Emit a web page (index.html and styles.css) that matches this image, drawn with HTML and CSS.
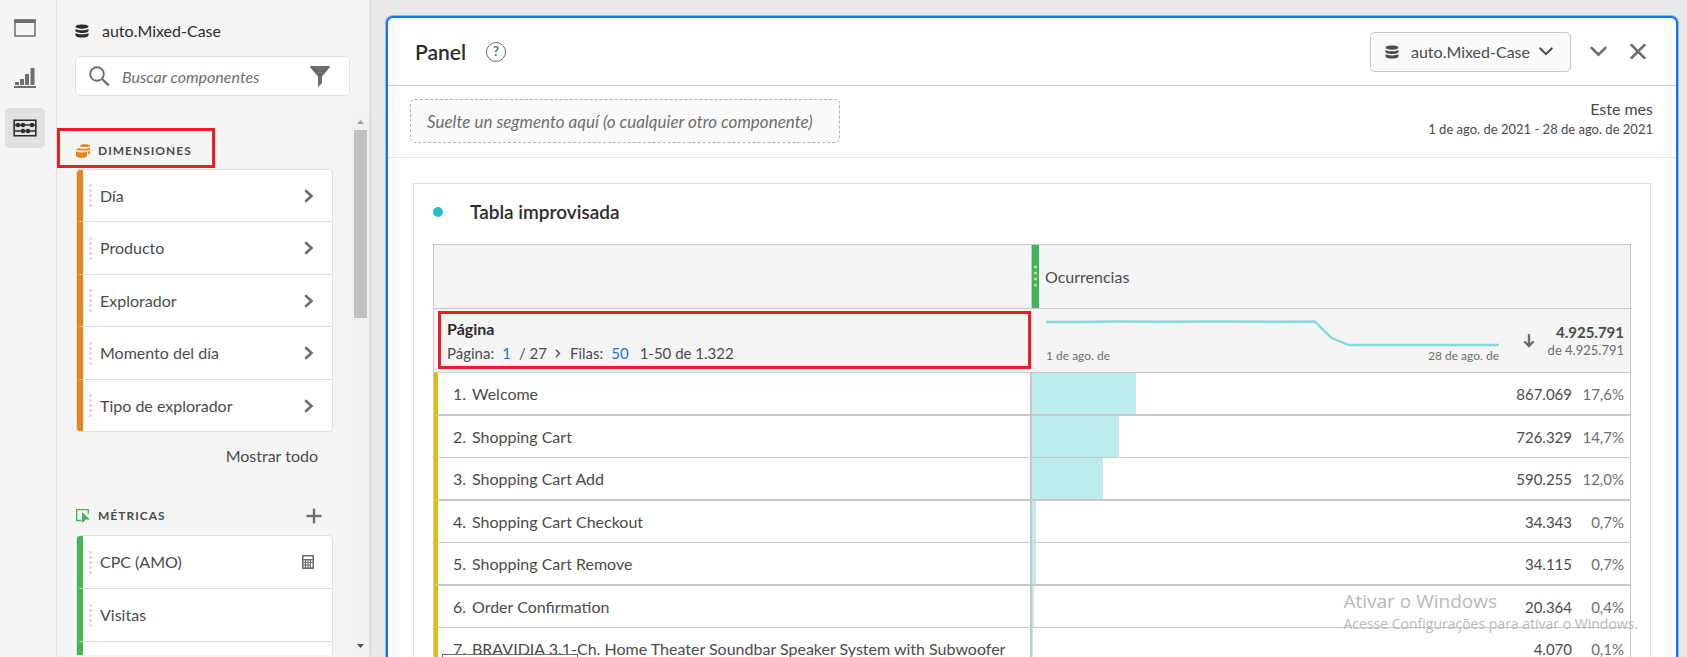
FILE: index.html
```html
<!DOCTYPE html>
<html lang="es">
<head>
<meta charset="utf-8">
<title>Panel - auto.Mixed-Case</title>
<link rel="stylesheet" href="styles.css">
</head>
<body>
<svg class="defs" aria-hidden="true">
  <symbol id="i-data" viewBox="0 0 14 14"><path d="M.5 2.6C.5 1.2 3.4.4 7 .4s6.500.8 6.500 2.200S10.600 4.800 7 4.800.5 4 .5 2.600zM.5 4.700C2 5.800 4.400 6.200 7 6.200s5-.4 6.500-1.500v2.100C13.500 8.200 10.600 9 7 9S.5 8.200.5 6.800zM.5 9C2 10.100 4.400 10.400 7 10.400s5-.3 6.500-1.400v2.200c0 1.400-2.900 2.300-6.500 2.300S.5 12.600.5 11.200z" fill="currentColor"/></symbol>
  <symbol id="i-right" viewBox="0 0 10 14"><path d="M2 2l5.500 5L2 12" fill="none" stroke="currentColor" stroke-width="2.600" stroke-linecap="round"/></symbol>
  <symbol id="i-down" viewBox="0 0 16 10"><path d="M1.500 1.500L8 8l6.500-6.500" fill="none" stroke="currentColor" stroke-width="2.400" stroke-linecap="round"/></symbol>
  <symbol id="i-grip" viewBox="0 0 3 23"><path d="M0 0h3v3H0zM0 5h3v3H0zM0 10h3v3H0zM0 15h3v3H0zM0 20h3v3H0z" fill="#e1e1e1"/></symbol>
</svg>
<div class="app">
  <nav class="rail" aria-label="Vistas">
    <button class="rail-button" aria-label="Paneles"><svg width="22" height="18" viewBox="0 0 22 18"><path d="M1 1h20v16H1z" fill="none" stroke="#6e6e6e" stroke-width="1.500"/><path d="M.5.5h21v3.500H.5z" fill="#6e6e6e"/></svg></button>
    <button class="rail-button" aria-label="Visualizaciones"><svg width="22" height="20" viewBox="0 0 22 20"><path d="M0 18h22v2H0zM1 14h4v3H1zM6 11h4v6H6zM11 6h4v11h-4zM16.500 0h4v17h-4z" fill="#6e6e6e"/></svg></button>
    <button class="rail-button selected" aria-label="Componentes"><svg width="24" height="18" viewBox="0 0 24 18"><path d="M1.200 1.200h21.600v15.600H1.200zM1 6h22M1 12h22" fill="none" stroke="#2c2c2c" stroke-width="1.600"/><g fill="#2c2c2c"><circle cx="5" cy="6" r="2.200"/><circle cx="10" cy="6" r="2.200"/><circle cx="19" cy="6" r="2.200"/><circle cx="10" cy="12" r="2.200"/><circle cx="15" cy="12" r="2.200"/></g></svg></button>
  </nav>

  <aside class="sidebar">
    <div class="suite"><svg width="14" height="14"><use href="#i-data"/></svg>auto.Mixed-Case</div>
    <div class="search">
      <svg width="21" height="20" viewBox="0 0 21 20" fill="none" stroke="#6e6e6e" stroke-width="1.900"><circle cx="8" cy="8" r="6.800"/><path d="M13 13l6.800 6.400" stroke-width="2.400"/></svg>
      <input type="search" placeholder="Buscar componentes" aria-label="Buscar componentes">
      <button aria-label="Filtrar"><svg width="20" height="21" viewBox="0 0 20 21"><path d="M.3 0h19.400v1.500L12 10.500v6.700L8 21V10.500L.3 1.500z" fill="#6e6e6e"/></svg></button>
    </div>
    <div class="library">
      <div class="components">
        <h2 class="heading highlighted"><svg width="14" height="14" viewBox="0 0 14 14" fill="#e68619"><path d="M4 1.700C4 .7 6 .2 9 .2s5 .5 5 1.500-2 1.400-5 1.400-5-.4-5-1.400zM3.500 4.200c3 .8 8 .8 10.500-.7v1.900C13 6.500 10.500 6.700 8 6.600 4 6.500.3 6.500.3 5.200c0-.4.7-.8 3.200-1zM0 7.200c1.500 1 4 1.200 6.500 1.200 2 0 3.500-.2 4.500-.8v4.200c0 1.300-2.500 2.100-5.500 2.100S0 13.100 0 11.800zM12 7.500c1-.1 1.600-.4 2-.8v2c0 .7-.8 1.200-2 1.500z"/></svg>Dimensiones</h2>
        <ul class="list dimensions">
          <li><svg class="grip"><use href="#i-grip"/></svg><span>Día</span><button aria-label="Abrir Día"><svg width="10" height="14"><use href="#i-right"/></svg></button></li>
          <li><svg class="grip"><use href="#i-grip"/></svg><span>Producto</span><button aria-label="Abrir Producto"><svg width="10" height="14"><use href="#i-right"/></svg></button></li>
          <li><svg class="grip"><use href="#i-grip"/></svg><span>Explorador</span><button aria-label="Abrir Explorador"><svg width="10" height="14"><use href="#i-right"/></svg></button></li>
          <li><svg class="grip"><use href="#i-grip"/></svg><span>Momento del día</span><button aria-label="Abrir Momento del día"><svg width="10" height="14"><use href="#i-right"/></svg></button></li>
          <li><svg class="grip"><use href="#i-grip"/></svg><span>Tipo de explorador</span><button aria-label="Abrir Tipo de explorador"><svg width="10" height="14"><use href="#i-right"/></svg></button></li>
        </ul>
        <a class="show-all" href="#todo">Mostrar todo</a>
        <div class="heading-row">
          <h2 class="heading"><svg width="14" height="14" viewBox="0 0 14 14"><path d="M5.500 11.500H.7V.7h11.600v4" fill="none" stroke="#44b556" stroke-width="1.300"/><path d="M6 3l8 7.500h-4L6 14z" fill="#44b556"/></svg>Métricas</h2>
          <button aria-label="Añadir métrica"><svg width="16" height="16" viewBox="0 0 16 16"><path d="M8 .5v15M.5 8h15" stroke="#6e6e6e" stroke-width="2.400"/></svg></button>
        </div>
        <ul class="list metrics">
          <li><svg class="grip"><use href="#i-grip"/></svg><span>CPC (AMO)</span><svg width="12" height="14" viewBox="0 0 12 14"><path d="M0 0h12v14H0z" fill="#6e6e6e"/><path d="M1.500 1.500h9V4h-9zM1.500 5.500h1.500V7H1.500zM4 5.500h1.500V7H4zM6.500 5.500H8V7H6.500zM9 5.500h1.500V7H9zM1.500 8h1.500v1.500H1.500zM4 8h1.500v1.500H4zM6.500 8H8v1.500H6.500zM1.500 10.700h1.500v1.500H1.500zM4 10.700h1.500v1.500H4zM6.500 10.700H8v1.500H6.500zM9 8h1.500v4.200H9z" fill="#fff"/></svg></li>
          <li><svg class="grip"><use href="#i-grip"/></svg><span>Visitas</span></li>
          <li></li>
        </ul>
      </div>
      <div class="scrollbar" aria-hidden="true">
        <svg width="17" height="17"><path d="M5 11h7L8.500 7z" fill="#a3a3a3"/></svg>
        <div class="thumb"></div>
        <svg class="end" width="17" height="17"><path d="M5 6h7L8.500 10z" fill="#505050"/></svg>
      </div>
    </div>
  </aside>

  <main class="canvas">
    <section class="panel">
      <header class="panel-header">
        <h1>Panel</h1>
        <button class="help" aria-label="Ayuda">?</button>
        <div class="suite-select">
          <svg width="14" height="14"><use href="#i-data"/></svg>
          <select aria-label="Grupo de informes"><option>auto.Mixed-Case</option></select>
          <svg class="chevron" width="14" height="9"><use href="#i-down"/></svg>
        </div>
        <button class="collapse" aria-label="Contraer"><svg width="17" height="11"><use href="#i-down"/></svg></button>
        <button class="close" aria-label="Cerrar"><svg width="16" height="15" viewBox="0 0 16 15"><path d="M1.500 1l13 13M14.500 1l-13 13" stroke="#6e6e6e" stroke-width="2.500" stroke-linecap="round"/></svg></button>
      </header>
      <div class="segment-row">
        <div class="drop-zone">Suelte un segmento aquí (o cualquier otro componente)</div>
        <div class="dates"><div class="preset">Este mes</div><div>1 de ago. de 2021 - 28 de ago. de 2021</div></div>
      </div>
      <article class="card">
        <h2><span class="dot"></span>Tabla improvisada</h2>
        <table>
          <colgroup><col class="col-name"><col></colgroup>
          <thead>
            <tr class="columns"><th></th><th><div class="metric-head"><span class="handle"><svg width="3" height="23" viewBox="0 0 3 23"><g fill="#b9e3bf"><circle cx="1.500" cy="2" r="1.500"/><circle cx="1.500" cy="8" r="1.500"/><circle cx="1.500" cy="14" r="1.500"/><circle cx="1.500" cy="20" r="1.500"/></g></svg></span>Ocurrencias</div></th></tr>
            <tr class="summary">
              <th><div class="paging"><strong>Página</strong><div class="pager"><span>Página:</span><button>1</button><span>/ 27</span><button class="next" aria-label="Página siguiente"><svg width="6" height="9" viewBox="0 0 6 9"><path d="M1 .8l3.500 3.700L1 8.200" fill="none" stroke="#505050" stroke-width="1.500"/></svg></button><span>Filas:</span><button class="rows">50</button><span>1-50 de 1.322</span></div></div></th>
              <th><div class="totals">
                <div class="trend"><svg viewBox="0 0 452 30" preserveAspectRatio="none"><path d="M0 4l30 0 40-.5 40 .3 60-.3 60 .2 38-.2 17 16.500L302 27h150" fill="none" stroke="#86dadd" stroke-width="2.400"/></svg><div class="range"><span>1 de ago. de</span><span>28 de ago. de</span></div></div>
                <button class="sort" aria-label="Orden descendente"><svg width="12" height="14" viewBox="0 0 12 14"><path d="M6 1v11M2 8l4 4 4-4" fill="none" stroke="#6e6e6e" stroke-width="2.400" stroke-linecap="round"/></svg></button>
                <div class="sum"><strong>4.925.791</strong><span>de 4.925.791</span></div>
              </div></th>
            </tr>
          </thead>
          <tbody>
            <tr><td><div class="item"><b>1.</b>Welcome</div></td><td><div class="value"><i style="width:17.6%"></i><span>867.069</span><em>17,6%</em></div></td></tr>
            <tr><td><div class="item"><b>2.</b>Shopping Cart</div></td><td><div class="value"><i style="width:14.7%"></i><span>726.329</span><em>14,7%</em></div></td></tr>
            <tr><td><div class="item"><b>3.</b>Shopping Cart Add</div></td><td><div class="value"><i style="width:12%"></i><span>590.255</span><em>12,0%</em></div></td></tr>
            <tr><td><div class="item"><b>4.</b>Shopping Cart Checkout</div></td><td><div class="value"><i style="width:0.7%"></i><span>34.343</span><em>0,7%</em></div></td></tr>
            <tr><td><div class="item"><b>5.</b>Shopping Cart Remove</div></td><td><div class="value"><i style="width:0.7%"></i><span>34.115</span><em>0,7%</em></div></td></tr>
            <tr><td><div class="item"><b>6.</b>Order Confirmation</div></td><td><div class="value"><i style="width:0.4%"></i><span>20.364</span><em>0,4%</em></div></td></tr>
            <tr><td><div class="item"><b>7.</b>BRAVIDIA 3.1-Ch. Home Theater Soundbar Speaker System with Subwoofer</div></td><td><div class="value"><i style="width:0.1%"></i><span>4.070</span><em>0,1%</em></div></td></tr>
          </tbody>
        </table>
      </article>
    </section>
  </main>
  <div class="status-tip"></div>
  <div class="watermark"><p>Ativar o Windows</p><p class="small">Acesse Configurações para ativar o Windows.</p></div>
</div>
</body>
</html>
```

FILE: styles.css
```css
* { box-sizing: border-box; margin: 0; padding: 0; }
body { font: 16px/20px Lato, sans-serif; color: #4b4b4b; background: #e9e9e9; }
button, input, select { font: inherit; color: inherit; background: none; border: 0; }
button { display: flex; align-items: center; justify-content: center; }
svg { display: block; flex: none; }
ul { list-style: none; }
.defs { position: absolute; width: 0; height: 0; }
.app { display: flex; height: 100vh; overflow: hidden; position: relative; }

.rail { flex: none; width: 57px; padding: 8px 5px; display: flex; flex-direction: column; gap: 10px; background: #f5f5f5; border-right: 1px solid #e1e1e1; }
.rail-button { width: 40px; height: 40px; border-radius: 5px; }
.rail-button.selected { background: #e1e1e1; }

.sidebar { flex: none; width: 315px; display: flex; flex-direction: column; padding-bottom: 2px; background: #f5f5f5; border-right: 3px solid #e1e1e1; }
.suite { display: flex; align-items: center; gap: 13px; margin: 21px 0 15px 18px; color: #2c2c2c; }
.search { display: flex; align-items: center; height: 40px; margin: 0 19px 0 18px; padding: 0 19px 0 13px; background: #fff; border: 1px solid #e1e1e1; border-radius: 5px; }
.search input { flex: 1; min-width: 0; padding: 2px 0 0 12px; outline: 0; }
.search input::placeholder { font-style: italic; color: #6e6e6e; opacity: 1; }
.library { flex: 1; min-height: 0; display: flex; margin-top: 17px; }
.components { flex: 1; overflow: hidden; padding-top: 15px; }
.scrollbar { width: 17px; display: flex; flex-direction: column; background: #f1f1f1; }
.thumb { height: 188px; margin: 0 2px; background: #c1c1c1; }
.scrollbar .end { margin-top: auto; }
.heading { display: flex; align-items: center; gap: 8px; padding-left: 19px; font-size: 12px; line-height: 18px; font-weight: 700; letter-spacing: 1px; text-transform: uppercase; }
.highlighted { width: 158px; height: 40px; padding: 6px 0 0 16px; border: 3px solid #ee1c25; }
.heading-row { display: flex; align-items: center; justify-content: space-between; height: 30px; padding-right: 30px; margin-top: 35px; }
.heading-row button { width: 16px; }
.list { margin: 1px 19px 0 19px; background: #fff; border: 1px solid #e1e1e1; border-radius: 4px; overflow: hidden; }
.metrics { margin-top: 4px; }
.list li { display: flex; align-items: center; height: 52px; padding-right: 18px; border-left: 6px solid #e68619; border-bottom: 1px solid #e1e1e1; }
.list li:nth-child(even) { height: 53px; }
.list li:last-child { height: 51px; border-bottom: 0; }
.list.metrics li { height: 53px; border-left-color: #44b556; }
.list span { flex: 1; padding-left: 8px; }
.grip { width: 3px; height: 23px; margin-left: 6px; }
.list button { color: #6e6e6e; }
.show-all { display: block; margin: 14px 34px 0 0; text-align: right; color: #4b4b4b; text-decoration: none; }

.canvas { flex: 1; min-width: 0; padding: 16px 9px 0 14px; }
.panel { height: 100vh; background: #fff; border: 2px solid #1473e6; border-radius: 7px; box-shadow: 0 0 0 1px #8db8ee; }
.panel-header { display: flex; align-items: center; height: 68px; padding: 0 30px 0 27px; border-bottom: 1px solid #c8c8c8; }
h1 { font-size: 21px; line-height: 24px; font-weight: 600; color: #2c2c2c; }
.help { width: 20px; height: 20px; margin-left: 20px; border: 1px solid #6e6e6e; border-radius: 50%; font-size: 13px; line-height: 13px; font-weight: 700; color: #6e6e6e; }
.suite-select { position: relative; display: flex; align-items: center; margin-left: auto; width: 201px; height: 40px; padding-left: 14px; background: #fafafa; border: 1px solid #c8c8c8; border-radius: 5px; }
.suite-select select { appearance: none; width: 132px; padding-left: 12px; outline: 0; }
.suite-select .chevron { margin-left: 8px; }
.collapse { margin-left: 19px; color: #6e6e6e; }
.close { margin-left: 23px; }
.segment-row { display: flex; justify-content: space-between; height: 72px; padding: 13px 23px 0 22px; border-bottom: 1px solid #e9e9e9; }
.drop-zone { width: 430px; height: 44px; padding: 12px 16px; background: #fafafa; border: 1px dashed #b3b3b3; border-radius: 5px; font-size: 17px; font-style: italic; color: #6e6e6e; white-space: nowrap; }
.dates { text-align: right; font-size: 13px; }
.preset { font-size: 16px; }

.card { margin: 25px 25px 0; padding: 16px 19px; border: 1px solid #e1e1e1; }
.card h2 { display: flex; align-items: center; gap: 27px; font-size: 19px; line-height: 24px; font-weight: 600; color: #2c2c2c; }
.dot { width: 10px; height: 10px; border-radius: 50%; background: #26c0c7; }
table { width: 100%; margin-top: 20px; table-layout: fixed; border-collapse: separate; border-spacing: 0; border: 1px solid #c8c8c8; }
.col-name { width: 50%; }
th, td { border-bottom: 1px solid #c8c8c8; text-align: left; font-weight: 400; }
th { background: #f5f5f5; }
td:first-child { border-right: 2px solid #c8c8c8; border-left: 4px solid #dfbf00; }
tbody tr:nth-child(odd) td { border-bottom-width: 2px; }
.metric-head { display: flex; align-items: center; gap: 6px; height: 63px; }
.columns th:first-child { border-right: 1px solid #c8c8c8; }
.handle { display: flex; align-items: center; justify-content: center; width: 7px; height: 100%; background: #44b556; }
.paging { height: 58px; margin: 2px 1px 3px 4px; padding: 3px 6px; border: 3px solid #ee1c25; }
.paging strong { display: block; line-height: 24px; color: #2c2c2c; }
.pager { display: flex; align-items: center; font-size: 15px; line-height: 24px; white-space: nowrap; }
.pager button { color: #1473e6; margin: 0 8px; }
.pager .next { margin: 0 9px 0 8px; }
.pager .rows { margin: 0 11px 0 8px; }
.totals { display: flex; align-items: center; height: 63px; padding: 0 6px 0 14px; font-size: 12px; line-height: 16px; color: #6e6e6e; }
.trend { flex: 1; }
.trend svg { width: 100%; height: 30px; }
.range { display: flex; justify-content: space-between; }
.sort { width: 12px; margin: 0 19px 0 24px; }
.sum { width: 70px; display: flex; flex-direction: column; align-items: flex-end; white-space: nowrap; font-size: 13px; line-height: 18px; }
.sum strong { font-size: 15px; color: #4b4b4b; }
.item { display: flex; align-items: center; height: 41px; white-space: nowrap; }
.item b { width: 28px; margin-right: 6px; font-weight: 400; text-align: right; }
.value { display: flex; align-items: center; height: 41px; padding-right: 6px; font-size: 15px; }
.value i { align-self: stretch; background: #bcecec; }
.value span { margin-left: auto; }
.value em { width: 52px; font-style: normal; text-align: right; color: #6e6e6e; }

.status-tip { position: absolute; left: 442px; bottom: -12px; width: 136px; height: 15px; background: #fff; border: 1px solid #6e6e6e; }
.watermark { position: absolute; right: 49px; bottom: 23px; font-family: "Open Sans", sans-serif; font-size: 19px; line-height: 26px; color: #b9b9b9; pointer-events: none; }
.watermark .small { font-size: 14px; line-height: 20px; }
```
